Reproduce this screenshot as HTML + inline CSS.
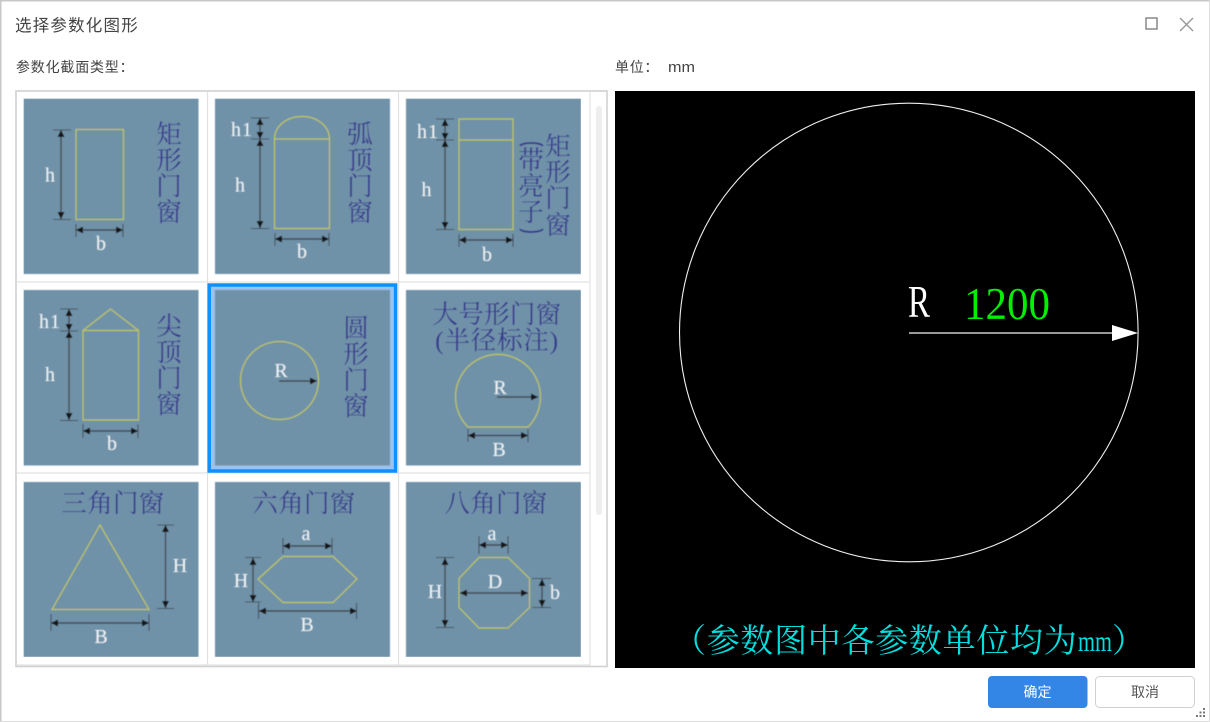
<!DOCTYPE html>
<html lang="zh">
<head>
<meta charset="utf-8">
<title>选择参数化图形</title>
<style>
html,body{margin:0;padding:0;background:#fff;width:1210px;height:722px;overflow:hidden}
svg{display:block}
.ui{font-family:"Liberation Sans","Noto Sans CJK SC",sans-serif;fill:#444}
.t{font-family:"Liberation Serif","Noto Serif CJK SC",serif;font-size:25.5px;fill:#36348c;text-anchor:middle}
.l{font-family:"Liberation Serif",serif;font-size:20px;fill:#eef3f6;text-anchor:middle}
.img{fill:#6f92a8}
.y{fill:none;stroke:#c0c55a;stroke-width:1.2}
.d{stroke:#3f4952;stroke-width:1.4;fill:none;marker-start:url(#as);marker-end:url(#ae)}
.e{stroke:#3f4952;stroke-width:1.4;fill:none;marker-end:url(#ae)}
.k{stroke:#46515b;stroke-width:1.1;fill:none}
</style>
</head>
<body>
<svg width="1210" height="722" viewBox="0 0 1210 722" xmlns="http://www.w3.org/2000/svg">
<defs>
<marker id="ae" markerUnits="userSpaceOnUse" markerWidth="8" markerHeight="8" refX="7" refY="4" orient="auto"><path d="M0 .5L7 4L0 7.500Z" fill="#141414"/></marker>
<marker id="as" markerUnits="userSpaceOnUse" markerWidth="8" markerHeight="8" refX="0" refY="4" orient="auto"><path d="M7 .5L0 4L7 7.500Z" fill="#141414"/></marker>
<filter id="b" x="0" y="0" width="100%" height="100%"><feGaussianBlur stdDeviation="0.4"/></filter>
</defs>

<!-- window frame -->
<rect x="0" y="0" width="1210" height="722" fill="#fff"/>
<rect x="0" y="0" width="1210" height="1.5" fill="#c8c8c8"/>
<rect x="0" y="0" width="1.5" height="722" fill="#c8c8c8"/>
<rect x="0" y="721" width="1210" height="1" fill="#dedede"/>
<rect x="1209" y="0" width="1" height="722" fill="#dedede"/>

<text class="ui" x="15" y="31" font-size="16.5" letter-spacing="1.2">选择参数化图形</text>
<rect x="1146" y="18" width="11" height="11" fill="none" stroke="#808080" stroke-width="1.4"/>
<path d="M1180 18L1193 31M1193 18L1180 31" stroke="#999" stroke-width="1.4" fill="none"/>

<text class="ui" x="16" y="72" font-size="14" letter-spacing=".8">参数化截面类型：</text>
<text class="ui" x="615" y="72" font-size="14" letter-spacing=".7">单位：</text>
<text class="ui" x="668" y="72" font-size="14.5" textLength="27" lengthAdjust="spacingAndGlyphs">mm</text>

<!-- list panel -->
<rect x="16" y="91" width="591" height="575.5" fill="#fff" stroke="#d0d0d0" stroke-width="1.6"/>
<path d="M207.5 92V666M398.5 92V666M590 92V666M17 282H590M17 473H590M17 665H590" stroke="#e2e2e2" stroke-width="1.2" fill="none"/>
<rect x="596" y="106" width="6" height="409" rx="3" fill="#eeeeee"/>

<!-- selected cell -->
<rect x="209.2" y="285" width="186.4" height="186" fill="#9cc3ee" stroke="#0f90ff" stroke-width="3.5"/>

<g filter="url(#b)">
<!-- cell 1 -->
<rect class="img" x="23.500" y="98.500" width="175" height="175.500"/>
<rect class="y" x="76" y="129.500" width="47.500" height="90"/>
<path class="d" d="M61 130V219"/><path class="k" d="M53 130H71M53 219.500H71"/>
<path class="d" d="M76 230H123"/><path class="k" d="M76 224V237M123 224V237"/>
<text class="l" x="50" y="181.500">h</text><text class="l" x="101" y="250">b</text>
<text class="t" x="169" y="143">矩</text><text class="t" x="169" y="169">形</text><text class="t" x="169" y="195">门</text><text class="t" x="169" y="221">窗</text>

<!-- cell 2 -->
<rect class="img" x="215" y="98.500" width="175" height="175.500"/>
<path class="y" d="M274.500 139V228.500H329.500V139ZM274.500 139C274.500 126 287 116.500 302 116.500S329.500 126 329.500 139"/>
<path class="d" d="M260 118V139"/><path class="d" d="M260 139V228"/><path class="k" d="M251 118H269M251 139H269M251 228.500H269"/>
<path class="d" d="M275 239H329"/><path class="k" d="M275 233V246M329 233V246"/>
<text class="l" x="242" y="136" letter-spacing="1">h1</text><text class="l" x="240" y="191.500">h</text><text class="l" x="302" y="258">b</text>
<text class="t" x="360" y="143">弧</text><text class="t" x="360" y="169">顶</text><text class="t" x="360" y="195">门</text><text class="t" x="360" y="221">窗</text>

<!-- cell 3 -->
<rect class="img" x="406" y="98.500" width="175" height="175.500"/>
<path class="y" d="M459 119H513V229.500H459ZM459 140H513"/>
<path class="d" d="M445 119V140"/><path class="d" d="M445 140V229"/><path class="k" d="M436 119H454M436 140H454M436 229.500H454"/>
<path class="d" d="M459 240H513"/><path class="k" d="M459 234V247M513 234V247"/>
<text class="l" x="428" y="138" letter-spacing="1">h1</text><text class="l" x="426.500" y="196">h</text><text class="l" x="487" y="261">b</text>
<text class="t" x="558" y="155">矩</text><text class="t" x="558" y="181">形</text><text class="t" x="558" y="207">门</text><text class="t" x="558" y="234">窗</text>
<path d="M520 146C522 142 540 142 543 146M520 229C522 233 540 233 543 229" fill="none" stroke="#36348c" stroke-width="1.8"/>
<text class="t" x="531" y="169">带</text><text class="t" x="531" y="195">亮</text><text class="t" x="531" y="221">子</text>

<!-- cell 4 -->
<rect class="img" x="23.500" y="290" width="175" height="175.500"/>
<path class="y" d="M83 330.500H138.500V420H83ZM83 330.500L110.500 309L138.500 330.500"/>
<path class="d" d="M69 309V331"/><path class="d" d="M69 331V420"/><path class="k" d="M60 309H78M60 331H78M60 420.500H78"/>
<path class="d" d="M83 431H138"/><path class="k" d="M83 424V438M138 424V438"/>
<text class="l" x="50" y="328" letter-spacing="1">h1</text><text class="l" x="50" y="381">h</text><text class="l" x="112" y="450">b</text>
<text class="t" x="169" y="335">尖</text><text class="t" x="169" y="361">顶</text><text class="t" x="169" y="387">门</text><text class="t" x="169" y="413">窗</text>

<!-- cell 5 -->
<rect class="img" x="215" y="290" width="175" height="175.500"/>
<circle class="y" cx="279.500" cy="380.500" r="39"/>
<path class="e" d="M279 381H317"/>
<text class="l" x="281" y="377">R</text>
<text class="t" x="356" y="337">圆</text><text class="t" x="356" y="363">形</text><text class="t" x="356" y="389">门</text><text class="t" x="356" y="415">窗</text>

<!-- cell 6 -->
<rect class="img" x="406" y="290" width="175" height="175.500"/>
<text class="t" x="497" y="323" letter-spacing=".3">大号形门窗</text>
<text class="t" x="497" y="349" letter-spacing=".8">(半径标注)</text>
<path class="y" d="M468 427A42.500 42.500 0 1 1 528 427Z"/>
<path class="e" d="M497 397H538"/>
<path class="d" d="M468 435.500H528"/><path class="k" d="M468 429V442M528 429V442"/>
<text class="l" x="500" y="394">R</text><text class="l" x="499" y="456">B</text>

<!-- cell 7 -->
<rect class="img" x="23.500" y="482" width="175" height="175"/>
<text class="t" x="113" y="512" letter-spacing=".3">三角门窗</text>
<path class="y" d="M100 525L52 609.500H149Z"/>
<path class="d" d="M165.500 525V608"/><path class="k" d="M157 525H174M157 608.500H174"/>
<path class="d" d="M51 623H149"/><path class="k" d="M51 614V631M149 614V631"/>
<text class="l" x="180" y="572">H</text><text class="l" x="101" y="643">B</text>

<!-- cell 8 -->
<rect class="img" x="215" y="482" width="175" height="175"/>
<text class="t" x="304" y="512" letter-spacing=".3">六角门窗</text>
<path class="y" d="M283 556.500H333L357 579L333 602.500H283L258 579Z"/>
<path class="d" d="M283 546H332"/><path class="k" d="M283 538V554M332 538V554"/>
<path class="d" d="M253 558V602"/><path class="k" d="M245 557.500H261M245 602H261"/>
<path class="d" d="M259 611H357"/><path class="k" d="M258.500 603V619M356.500 603V619"/>
<text class="l" x="306" y="540">a</text><text class="l" x="241" y="587">H</text><text class="l" x="307" y="631">B</text>

<!-- cell 9 -->
<rect class="img" x="406" y="482" width="175" height="175"/>
<text class="t" x="496" y="512" letter-spacing=".3">八角门窗</text>
<path class="y" d="M479 557.500H508L529.500 578.500V607.500L508 628H479L459 607.500V578.500Z"/>
<path class="d" d="M479 545H508"/><path class="k" d="M479 536V554M508 536V554"/>
<path class="d" d="M445 558V627"/><path class="k" d="M436 557.500H454M436 627.500H454"/>
<path class="d" d="M460 593H528"/>
<path class="d" d="M542 579V607"/><path class="k" d="M532 578.500H551M532 607.500H551"/>
<text class="l" x="492" y="540">a</text><text class="l" x="435" y="598">H</text><text class="l" x="495" y="588">D</text><text class="l" x="555" y="599">b</text>
</g>

<!-- preview -->
<rect x="615" y="91" width="580" height="577" fill="#000"/>
<circle cx="908.800" cy="332.500" r="229.300" fill="none" stroke="#f0f0f0" stroke-width="1.1"/>
<path d="M909 333H1113" stroke="#f4f4f4" stroke-width="1.2" fill="none"/>
<path d="M1112 325L1138 333L1112 341Z" fill="#fff"/>
<text x="908" y="317" font-family="'Liberation Serif',serif" font-size="45" fill="#fff" textLength="22" lengthAdjust="spacingAndGlyphs">R</text>
<text x="964" y="319" font-family="'Liberation Serif',serif" font-size="45" fill="#00f000" textLength="86" lengthAdjust="spacingAndGlyphs">1200</text>
<text x="673" y="652" font-family="'Liberation Serif','Noto Serif CJK SC',serif" font-size="33" fill="#00dede" letter-spacing=".7">（参数图中各参数单位均为</text>
<text x="1078" y="651" font-family="'Liberation Serif',serif" font-size="30" fill="#00dede" textLength="34" lengthAdjust="spacingAndGlyphs">mm</text>
<text x="1112" y="652" font-family="'Liberation Serif','Noto Serif CJK SC',serif" font-size="33" fill="#00dede">）</text>

<!-- buttons -->
<rect x="988" y="676" width="99.500" height="32" rx="4" fill="#3385e6"/>
<text class="ui" x="1037.500" y="697" font-size="14" text-anchor="middle" style="fill:#fff">确定</text>
<rect x="1095.500" y="676.500" width="99" height="31" rx="4" fill="#fff" stroke="#d0d0d0"/>
<text class="ui" x="1145" y="697" font-size="14" text-anchor="middle" style="fill:#555">取消</text>

<!-- resize grip -->
<path d="M1203 708h2v2h-2zM1199.500 711.500h2v2h-2zM1203 711.500h2v2h-2zM1196 715h2v2h-2zM1199.500 715h2v2h-2zM1203 715h2v2h-2z" fill="#777"/>
</svg>
</body>
</html>
